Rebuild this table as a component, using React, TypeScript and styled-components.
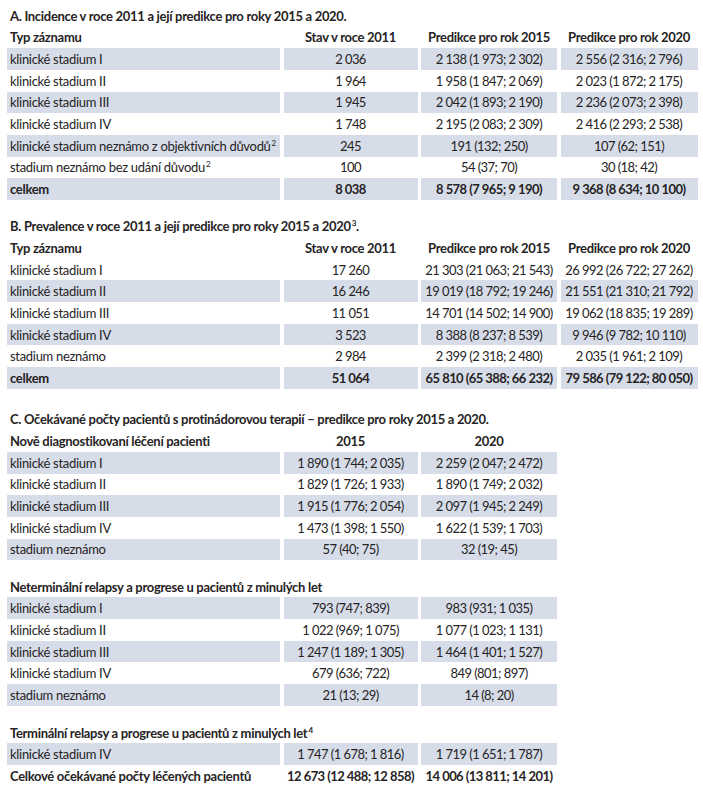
import styled, { createGlobalStyle } from 'styled-components'

type Row = { label: React.ReactNode; values: string[]; bold?: boolean }

const GlobalStyle = createGlobalStyle`
	body {
		margin: 0;
		background: #fff;
		color: #262324;
		font-family: Lato, 'Open Sans', sans-serif;
		font-size: 13px;
		letter-spacing: -0.3px;
	}
`

const ROW_H = '21.67px'

const Page = styled.div`
	padding: 5px 0 0 7px;
	width: 691px;
`

const Section = styled.section<{ $gap?: number }>`
	margin-top: ${(p) => p.$gap ?? 0}px;
`

const Grid = styled.div<{ $cols: number }>`
	display: grid;
	grid-template-columns: ${(p) =>
		p.$cols === 4 ? '273px 134px 136px 137px' : '273px 134px 136px'};
	column-gap: 3.5px;
`

const Caption = styled.div`
	grid-column: 1 / -1;
	height: ${ROW_H};
	display: flex;
	align-items: center;
	padding-left: 3px;
	font-weight: 700;
	white-space: nowrap;
`

const HeadCell = styled.div<{ $left?: boolean }>`
	height: ${ROW_H};
	display: flex;
	align-items: center;
	justify-content: ${(p) => (p.$left ? 'flex-start' : 'center')};
	padding: 0 3px;
	font-weight: 700;
	white-space: nowrap;
`

const Cell = styled.div<{ $shaded: boolean; $bold?: boolean; $left?: boolean }>`
	height: ${ROW_H};
	display: flex;
	align-items: center;
	justify-content: ${(p) => (p.$left ? 'flex-start' : 'center')};
	padding: 0 3px;
	background: ${(p) => (p.$shaded ? '#d6dde8' : 'transparent')};
	font-weight: ${(p) => (p.$bold ? 700 : 400)};
	letter-spacing: ${(p) => (p.$left ? '-0.3px' : '-0.55px')};
	white-space: nowrap;
`

const Sup = styled.sup`
	font-size: 8px;
	line-height: 0;
	vertical-align: 5px;
	margin-left: 1px;
`

const DataTable = ({
	cols,
	title,
	head,
	rows,
	firstShaded = true,
}: {
	cols: number
	title?: React.ReactNode
	head?: React.ReactNode[]
	rows: Row[]
	firstShaded?: boolean
}) => (
	<Grid $cols={cols}>
		{title && (
			<Caption>
				<span>{title}</span>
			</Caption>
		)}
		{head &&
			head.map((h, i) => (
				<HeadCell key={i} $left={i === 0}>
					<span>{h}</span>
				</HeadCell>
			))}
		{rows.map((r, ri) => {
			const shaded = r.bold && cols === 3 ? false : (ri % 2 === 0) === firstShaded
			return [
				<Cell key={`${ri}-l`} $left $shaded={shaded} $bold={r.bold}>
					<span>{r.label}</span>
				</Cell>,
				...r.values.map((v, vi) => (
					<Cell key={`${ri}-${vi}`} $shaded={shaded} $bold={r.bold}>
						{v}
					</Cell>
				)),
			]
		})}
	</Grid>
)

const incidence: Row[] = [
	{ label: 'klinické stadium I', values: ['2 036', '2 138 (1 973; 2 302)', '2 556 (2 316; 2 796)'] },
	{ label: 'klinické stadium II', values: ['1 964', '1 958 (1 847; 2 069)', '2 023 (1 872; 2 175)'] },
	{ label: 'klinické stadium III', values: ['1 945', '2 042 (1 893; 2 190)', '2 236 (2 073; 2 398)'] },
	{ label: 'klinické stadium IV', values: ['1 748', '2 195 (2 083; 2 309)', '2 416 (2 293; 2 538)'] },
	{
		label: (
			<>
				klinické stadium neznámo z objektivních důvodů<Sup>2</Sup>
			</>
		),
		values: ['245', '191 (132; 250)', '107 (62; 151)'],
	},
	{
		label: (
			<>
				stadium neznámo bez udání důvodu<Sup>2</Sup>
			</>
		),
		values: ['100', '54 (37; 70)', '30 (18; 42)'],
	},
	{ label: 'celkem', values: ['8 038', '8 578 (7 965; 9 190)', '9 368 (8 634; 10 100)'], bold: true },
]

const prevalence: Row[] = [
	{ label: 'klinické stadium I', values: ['17 260', '21 303 (21 063; 21 543)', '26 992 (26 722; 27 262)'] },
	{ label: 'klinické stadium II', values: ['16 246', '19 019 (18 792; 19 246)', '21 551 (21 310; 21 792)'] },
	{ label: 'klinické stadium III', values: ['11 051', '14 701 (14 502; 14 900)', '19 062 (18 835; 19 289)'] },
	{ label: 'klinické stadium IV', values: ['3 523', '8 388 (8 237; 8 539)', '9 946 (9 782; 10 110)'] },
	{ label: 'stadium neznámo', values: ['2 984', '2 399 (2 318; 2 480)', '2 035 (1 961; 2 109)'] },
	{ label: 'celkem', values: ['51 064', '65 810 (65 388; 66 232)', '79 586 (79 122; 80 050)'], bold: true },
]

const newlyDiagnosed: Row[] = [
	{ label: 'klinické stadium I', values: ['1 890 (1 744; 2 035)', '2 259 (2 047; 2 472)'] },
	{ label: 'klinické stadium II', values: ['1 829 (1 726; 1 933)', '1 890 (1 749; 2 032)'] },
	{ label: 'klinické stadium III', values: ['1 915 (1 776; 2 054)', '2 097 (1 945; 2 249)'] },
	{ label: 'klinické stadium IV', values: ['1 473 (1 398; 1 550)', '1 622 (1 539; 1 703)'] },
	{ label: 'stadium neznámo', values: ['57 (40; 75)', '32 (19; 45)'] },
]

const nonTerminal: Row[] = [
	{ label: 'klinické stadium I', values: ['793 (747; 839)', '983 (931; 1 035)'] },
	{ label: 'klinické stadium II', values: ['1 022 (969; 1 075)', '1 077 (1 023; 1 131)'] },
	{ label: 'klinické stadium III', values: ['1 247 (1 189; 1 305)', '1 464 (1 401; 1 527)'] },
	{ label: 'klinické stadium IV', values: ['679 (636; 722)', '849 (801; 897)'] },
	{ label: 'stadium neznámo', values: ['21 (13; 29)', '14 (8; 20)'] },
]

const terminal: Row[] = [
	{ label: 'klinické stadium IV', values: ['1 747 (1 678; 1 816)', '1 719 (1 651; 1 787)'] },
	{
		label: 'Celkové očekávané počty léčených pacientů',
		values: ['12 673 (12 488; 12 858)', '14 006 (13 811; 14 201)'],
		bold: true,
	},
]

const predHead = ['Typ záznamu', 'Stav v roce 2011', 'Predikce pro rok 2015', 'Predikce pro rok 2020']

export default function App() {
	return (
		<>
			<GlobalStyle />
			<Page>
				<Section>
					<DataTable
						cols={4}
						title="A. Incidence v roce 2011 a její predikce pro roky 2015 a 2020."
						head={predHead}
						rows={incidence}
					/>
				</Section>
				<Section $gap={15.5}>
					<DataTable
						cols={4}
						title={
							<>
								B. Prevalence v roce 2011 a její predikce pro roky 2015 a 2020<Sup>3</Sup>.
							</>
						}
						head={predHead}
						rows={prevalence}
						firstShaded={false}
					/>
				</Section>
				<Section $gap={20}>
					<DataTable
						cols={3}
						title="C. Očekávané počty pacientů s protinádorovou terapií – predikce pro roky 2015 a 2020."
						head={['Nově diagnostikovaní léčení pacienti', '2015', '2020']}
						rows={newlyDiagnosed}
					/>
				</Section>
				<Section $gap={15.5}>
					<DataTable
						cols={3}
						head={['Neterminální relapsy a progrese u pacientů z minulých let', '', '']}
						rows={nonTerminal}
					/>
				</Section>
				<Section $gap={16}>
					<DataTable
						cols={3}
						head={[
							<>
								Terminální relapsy a progrese u pacientů z minulých let<Sup>4</Sup>
							</>,
							'',
							'',
						]}
						rows={terminal}
					/>
				</Section>
			</Page>
		</>
	)
}
